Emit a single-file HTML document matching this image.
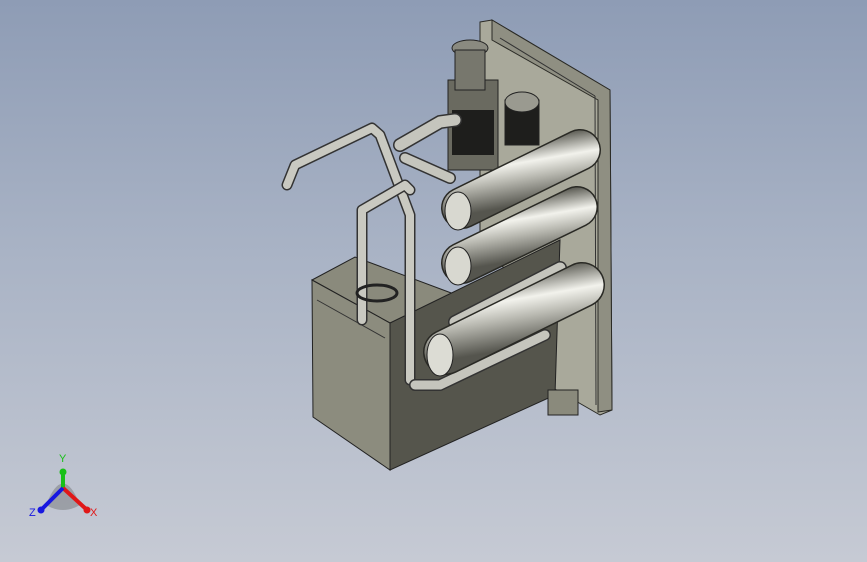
<!DOCTYPE html>
<html><head><style>
html,body{margin:0;padding:0;}
body{width:867px;height:562px;overflow:hidden;background:linear-gradient(#8e9cb5 0%,#a9b3c5 45%,#c6cad4 100%);font-family:"Liberation Sans",sans-serif;}
svg{position:absolute;left:0;top:0}
</style></head><body>
<svg width="867" height="562" viewBox="0 0 867 562">
<defs>
<linearGradient id="cyl" x1="0" y1="0" x2="0.35" y2="1">
<stop offset="0" stop-color="#5e5e56"/><stop offset="0.35" stop-color="#f2f2ec"/><stop offset="0.6" stop-color="#b8b8b0"/><stop offset="1" stop-color="#55554e"/>
</linearGradient>
</defs>
<polygon points="480,22 492,20 610,90 612,410 600,415 548,385 548,300 480,250" fill="#a9a99b" stroke="#2a2a25" stroke-width="1"/>
<polygon points="492,20 610,90 612,410 598,412 598,100 492,40" fill="#8f8f82" stroke="#2a2a25" stroke-width="1"/>
<line x1="500" y1="38" x2="595" y2="96" stroke="#333" />
<line x1="595" y1="96" x2="596" y2="405" stroke="#333"/>
<polygon points="312,280 355,257 470,300 390,323" fill="#8a8a7c" stroke="#222" stroke-width="1"/>
<polygon points="312,280 390,323 390,470 313,417" fill="#8c8c7e" stroke="#222" stroke-width="1"/>
<polygon points="390,323 560,240 555,395 390,470" fill="#55554c" stroke="#222" stroke-width="1"/>
<line x1="317" y1="300" x2="385" y2="338" stroke="#333"/>
<rect x="448" y="80" width="50" height="90" fill="#6a6a60" stroke="#222"/>
<rect x="452" y="110" width="42" height="45" fill="#1e1e1c"/>
<ellipse cx="470" cy="48" rx="18" ry="8" fill="#8a8a80" stroke="#222"/>
<rect x="455" y="50" width="30" height="40" fill="#77776d" stroke="#222"/>
<rect x="505" y="100" width="34" height="45" fill="#1e1e1c" stroke="#222"/>
<ellipse cx="522" cy="102" rx="17" ry="10" fill="#9a9a90" stroke="#222"/>
<g fill="none" stroke-linecap="round" stroke-linejoin="round">
<polyline points="287,185 295,165 372,128 380,135 410,215 410,380" stroke="#333" stroke-width="11"/>
<polyline points="287,185 295,165 372,128 380,135 410,215 410,380" stroke="#c9c9c1" stroke-width="8"/>
<polyline points="362,320 362,210 405,185 410,190" stroke="#333" stroke-width="11"/>
<polyline points="362,320 362,210 405,185 410,190" stroke="#c9c9c1" stroke-width="8"/>
<polyline points="400,145 440,122 455,120" stroke="#333" stroke-width="14"/>
<polyline points="400,145 440,122 455,120" stroke="#c5c5bd" stroke-width="11"/>
<polyline points="405,158 450,178" stroke="#333" stroke-width="12"/>
<polyline points="405,158 450,178" stroke="#c5c5bd" stroke-width="9"/>
<polyline points="415,385 440,385 545,335" stroke="#333" stroke-width="12"/>
<polyline points="415,385 440,385 545,335" stroke="#c5c5bd" stroke-width="9"/>
<polyline points="455,322 560,268" stroke="#333" stroke-width="14"/>
<polyline points="455,322 560,268" stroke="#c5c5bd" stroke-width="11"/>
<polyline points="480,238 560,200" stroke="#333" stroke-width="12"/>
<polyline points="480,238 560,200" stroke="#c5c5bd" stroke-width="9"/>
<line x1="462" y1="208" x2="580" y2="150" stroke="#2a2a25" stroke-width="42"/>
<line x1="462" y1="208" x2="580" y2="150" stroke="url(#cyl)" stroke-width="39"/>
<line x1="462" y1="263" x2="577" y2="207" stroke="#2a2a25" stroke-width="42"/>
<line x1="462" y1="263" x2="577" y2="207" stroke="url(#cyl)" stroke-width="39"/>
<line x1="446" y1="352" x2="582" y2="285" stroke="#2a2a25" stroke-width="46"/>
<line x1="446" y1="352" x2="582" y2="285" stroke="url(#cyl)" stroke-width="43"/>
</g>
<ellipse cx="458" cy="211" rx="13" ry="19" fill="#d8d8d0" stroke="#222"/>
<ellipse cx="458" cy="266" rx="13" ry="19" fill="#d8d8d0" stroke="#222"/>
<ellipse cx="440" cy="355" rx="13" ry="21" fill="#dcdcd4" stroke="#222"/>
<ellipse cx="377" cy="293" rx="20" ry="8" fill="none" stroke="#222" stroke-width="3"/>
<rect x="548" y="390" width="30" height="25" fill="#8a8a7c" stroke="#222"/>
</svg>
<svg width="867" height="562" viewBox="0 0 867 562">
<path d="M46,505 Q63,462 80,505 Q63,515 46,505Z" fill="#555" opacity="0.35"/>
<line x1="63" y1="488" x2="63" y2="472" stroke="#18c018" stroke-width="4"/>
<circle cx="63" cy="472" r="3.5" fill="#18c018"/>
<line x1="63" y1="488" x2="86" y2="509" stroke="#e01818" stroke-width="4"/>
<circle cx="87" cy="510" r="3.5" fill="#e01818"/>
<line x1="63" y1="488" x2="42" y2="509" stroke="#1818e0" stroke-width="4"/>
<circle cx="41" cy="510" r="3.5" fill="#1818e0"/>
<text x="59" y="462" fill="#18c018" font-size="11" font-family="Liberation Sans">Y</text>
<text x="90" y="516" fill="#e01818" font-size="11" font-family="Liberation Sans">X</text>
<text x="29" y="516" fill="#1818e0" font-size="11" font-family="Liberation Sans">Z</text>
</svg>
</body></html>
